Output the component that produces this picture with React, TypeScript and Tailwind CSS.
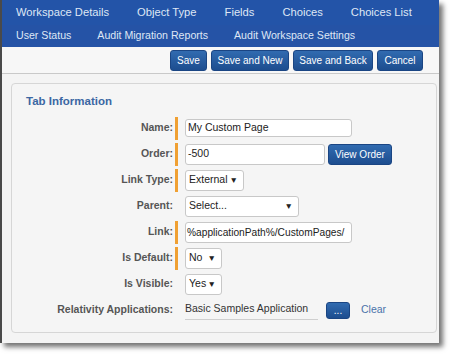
import React from "react"

const navTop = ["Workspace Details", "Object Type", "Fields", "Choices", "Choices List"]
const navBottom = ["User Status", "Audit Migration Reports", "Audit Workspace Settings"]
const actions = ["Save", "Save and New", "Save and Back", "Cancel"]

function Required({ on }: { on?: boolean }) {
  return <div className={`ml-[2px] mr-[7px] h-[23px] w-[3px] ${on ? "bg-[#f0a032]" : ""}`} />
}

function Row({ label, required, children }: { label: string; required?: boolean; children: React.ReactNode }) {
  return (
    <div className="flex h-[26px] items-center">
      <div className="w-[161px] text-right text-[10.5px] font-bold text-[#555]">{label}</div>
      <Required on={required} />
      {children}
    </div>
  )
}

function Select({ value, width }: { value: string; width: string }) {
  return (
    <div className={`flex h-[21px] items-center justify-between rounded-[3px] border border-[#c8c8c8] bg-white pl-[3px] pr-[5px] text-[10.5px] text-[#222] ${width}`}>
      <span>{value}</span>
      <span className="text-[8.5px]">▼</span>
    </div>
  )
}

function BlueButton({ label, className = "" }: { label: string; className?: string }) {
  return (
    <div
      className={`flex items-center justify-center rounded-[3px] border border-[#1a4583] bg-gradient-to-b from-[#316bb0] to-[#1d4d8f] text-[10px] text-white ${className}`}
    >
      {label}
    </div>
  )
}

export default function App() {
  return (
    <div className="h-[354px] w-[450px] bg-white" style={{ fontFamily: '"Liberation Sans", Arial, sans-serif' }}>
      <div className="flex h-[343px] w-[439px] flex-col border-l-2 border-[#4a4a4a] bg-[#f4f4f4] shadow-[4px_4px_5px_rgba(0,0,0,0.55)]">
        {/* nav */}
        <div className="bg-[#2354a8] text-[#dfe7f5]">
          <div className="flex h-[25px] items-center text-[11.2px]">
            {navTop.map((n) => (
              <span key={n} className="px-[14px]">
                {n}
              </span>
            ))}
          </div>
          <div className="flex h-[22px] items-center bg-[#2553a6] pl-[1px] text-[10.6px]">
            {navBottom.map((n) => (
              <span key={n} className="px-[13px]">
                {n}
              </span>
            ))}
          </div>
        </div>

        {/* actions */}
        <div className="flex h-[27px] items-center justify-end gap-[4px] border-b border-[#c9c9c9] bg-[#f7f7f7] pr-[16px]">
          {actions.map((a) => (
            <BlueButton
              key={a}
              label={a}
              className={`h-[21px] ${a === "Save" ? "w-[37px]" : a === "Cancel" ? "w-[46px]" : a === "Save and New" ? "w-[78px]" : "w-[80px]"}`}
            />
          ))}
        </div>

        {/* panel */}
        <div className="ml-[9px] mt-[9px] h-[250px] w-[426px] rounded-[4px] border border-[#d6d6d6] bg-[#f5f5f5]">
          <div className="pl-[14px] pt-[9px] text-[11.5px] font-bold text-[#3b67a3]">Tab Information</div>
          <div className="mt-[5px] flex flex-col">
            <Row label="Name:" required>
              <div className="flex h-[18px] w-[167px] items-center rounded-[3px] border border-[#c8c8c8] bg-white pl-[2px] text-[10.5px] text-[#222]">
                My Custom Page
              </div>
            </Row>
            <Row label="Order:" required>
              <div className="flex h-[21px] w-[140px] items-center rounded-[3px] border border-[#c8c8c8] bg-white pl-[2px] text-[10.5px] text-[#222]">
                -500
              </div>
              <BlueButton label="View Order" className="ml-[3px] h-[21px] w-[64px]" />
            </Row>
            <Row label="Link Type:" required>
              <Select value="External" width="w-[59px]" />
            </Row>
            <Row label="Parent:">
              <Select value="Select..." width="w-[114px]" />
            </Row>
            <Row label="Link:" required>
              <div className="flex h-[21px] w-[167px] items-center overflow-hidden whitespace-nowrap rounded-[3px] border border-[#c8c8c8] bg-white pl-[1px] text-[10.2px] text-[#222]">
                %applicationPath%/CustomPages/
              </div>
            </Row>
            <Row label="Is Default:" required>
              <Select value="No" width="w-[37px]" />
            </Row>
            <Row label="Is Visible:">
              <Select value="Yes" width="w-[37px]" />
            </Row>
            <Row label="Relativity Applications:">
              <div className="w-[133px] border-b border-[#cfcfcf] pb-[2px] text-[10.5px] text-[#333]">
                Basic Samples Application
              </div>
              <BlueButton label="..." className="ml-[8px] h-[17px] w-[24px] text-[8px]" />
              <span className="ml-[11px] text-[10.5px] text-[#4a73aa]">Clear</span>
            </Row>
          </div>
        </div>
      </div>
    </div>
  )
}
